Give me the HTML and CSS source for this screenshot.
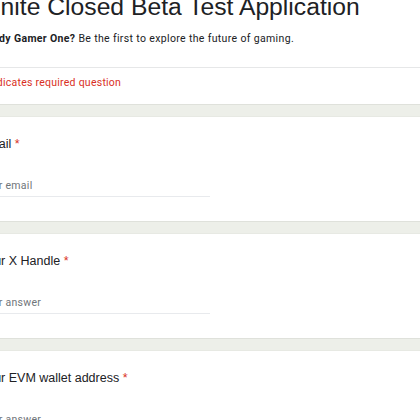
FILE: index.html
```html
<!DOCTYPE html>
<html lang="en">
<head>
<meta charset="utf-8">
<title>Ignite Closed Beta Test Application</title>
<link rel="stylesheet" href="styles.css">
</head>
<body>
<div class="form">
  <div class="card header">
    <div class="head-top">
      <h1 class="title">Ignite Closed Beta Test Application</h1>
      <p class="desc"><b>Ready Gamer One?</b> Be the first to explore the future of gaming.</p>
    </div>
    <div class="req-note">* Indicates required question</div>
  </div>
  <div class="card question">
    <div class="q-title">Email <span class="star">*</span></div>
    <div class="input"><span class="ph">Your email</span></div>
  </div>
  <div class="card question">
    <div class="q-title">Your X Handle <span class="star">*</span></div>
    <div class="input"><span class="ph">Your answer</span></div>
  </div>
  <div class="card question">
    <div class="q-title">Your EVM wallet address <span class="star">*</span></div>
    <div class="input"><span class="ph">Your answer</span></div>
  </div>
</div>
</body>
</html>
```
FILE: styles.css
```css
html, body {
  margin: 0;
  padding: 0;
  overflow: hidden;
  background: #edefe9;
}
.form {
  margin-top: -7px;
  margin-left: -44px;
  width: 720px;
  display: flex;
  flex-direction: column;
  gap: 11px;
}
.card {
  background: #ffffff;
  padding-left: 24px;
}
.header {
  border-bottom: 1px solid #dfe1db;
}
.head-top {
  border-bottom: 1px solid #e6e7e8;
  padding-bottom: 21px;
  margin-left: -24px;
  padding-left: 24px;
}
.title {
  margin: 0;
  font-family: "Liberation Sans", Arial, sans-serif;
  font-weight: normal;
  font-size: 24.7px;
  line-height: 28px;
  color: #202124;
}
.desc {
  margin: 11px 0 0 0;
  font-family: Roboto, "Liberation Sans", sans-serif;
  font-size: 10.5px;
  line-height: 14px;
  color: #202124;
  letter-spacing: 0.35px;
}
.desc b {
  font-weight: 700;
}
.req-note {
  padding: 8px 0 14px 0;
  font-family: Roboto, "Liberation Sans", sans-serif;
  font-size: 10.5px;
  line-height: 14px;
  letter-spacing: 0.25px;
  color: #d93025;
}
.question {
  border-top: 1px solid #e7e9e3;
  border-bottom: 1px solid #dfe1db;
  padding-top: 19px;
  padding-bottom: 24px;
}
.q-title {
  font-family: "Liberation Sans", Arial, sans-serif;
  font-size: 12.5px;
  line-height: 16px;
  color: #202124;
}
.star {
  color: #d93025;
}
.input {
  margin-top: 27px;
  width: 230px;
  padding-bottom: 3px;
  border-bottom: 1px solid #e8eaed;
}
.ph {
  display: block;
  font-family: Roboto, "Liberation Sans", sans-serif;
  font-size: 10.5px;
  line-height: 14px;
  letter-spacing: 0.3px;
  color: #70757a;
}
```
